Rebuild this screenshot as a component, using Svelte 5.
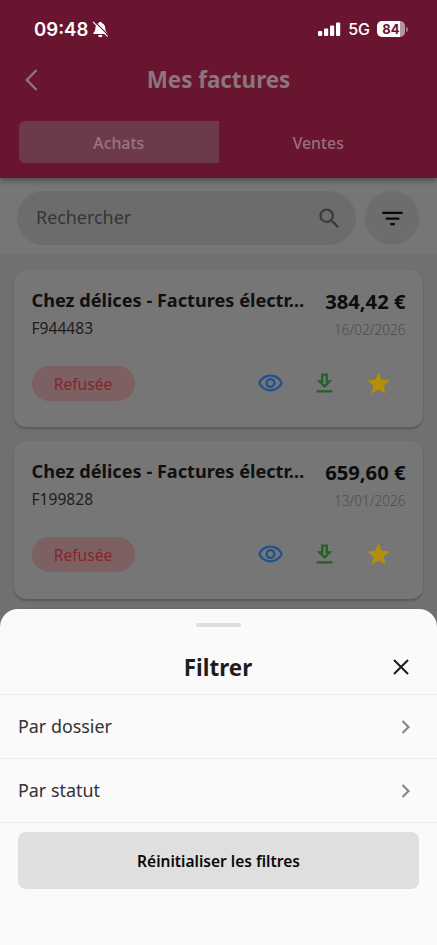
<script>
  const invoices = [
    { client: 'Chez délices - Factures électr…', number: 'F944483', amount: '384,42 €', date: '16/02/2026', status: 'Refusée' },
    { client: 'Chez délices - Factures électr…', number: 'F199828', amount: '659,60 €', date: '13/01/2026', status: 'Refusée' }
  ];
  const filters = ['Par dossier', 'Par statut'];
</script>

<div class="screen">
  <header>
    <div class="status-bar">
      <div class="clock">
        <span>09:48</span>
        <svg width="17" height="17" viewBox="0 0 17 17">
          <path d="M8.3 1C7.2 1 6.6 1.6 6.5 2.3C4.3 3 3.5 5 3.4 7.2C3.3 9.5 2.7 10.3 1.6 11.4C1 12.1 1.3 13 2.2 13H14.4C15.3 13 15.6 12.1 15 11.4C13.9 10.3 13.3 9.5 13.2 7.2C13.1 5 12.3 3 10.1 2.3C10 1.6 9.4 1 8.3 1ZM6.1 14A2.2 2.2 0 0 0 10.5 14Z" fill="#fff" />
          <path d="M2.6 0.6L16.4 14.4" stroke="#6a152f" stroke-width="1.3" />
          <path d="M1.3 1.2L15.3 15.2" stroke="#fff" stroke-width="1.2" stroke-linecap="round" />
        </svg>
      </div>
      <div class="signals">
        <svg width="23" height="15" viewBox="0 0 23 15" fill="#fff">
          <rect x="0" y="9" width="4.2" height="5" rx="1.1" />
          <rect x="6" y="6.5" width="4.2" height="7.5" rx="1.1" />
          <rect x="12" y="3.5" width="4.2" height="10.5" rx="1.1" />
          <rect x="18" y="0.5" width="4.2" height="13.5" rx="1.1" />
        </svg>
        <span class="network">5G</span>
        <span class="battery"><b>84</b></span>
        <i class="battery-tip"></i>
      </div>
    </div>
    <div class="title-bar">
      <svg width="16" height="24" viewBox="0 0 16 24" fill="none" stroke="#8b767e" stroke-width="2.4">
        <path d="M13.6 2L3.8 12L13.6 22" />
      </svg>
      <h1>Mes factures</h1>
    </div>
    <nav>
      <span class="tab active">Achats</span>
      <span class="tab">Ventes</span>
    </nav>
  </header>

  <section class="search">
    <div class="field">
      <span>Rechercher</span>
      <svg width="27" height="27" viewBox="0 0 24 24" fill="#3b3b3b">
        <path d="M15.5 14h-.79l-.28-.27A6.47 6.47 0 0 0 16 9.5 6.5 6.5 0 1 0 9.5 16c1.61 0 3.09-.59 4.23-1.57l.27.28v.79l5 4.99L20.49 19l-4.99-5zm-6 0C7.01 14 5 11.99 5 9.5S7.01 5 9.5 5 14 7.01 14 9.5 11.99 14 9.5 14z" />
      </svg>
    </div>
    <div class="filter">
      <svg width="27" height="27" viewBox="0 0 24 24" fill="#080808"><path d="M10 18h4v-2h-4v2zM3 6v2h18V6H3zm3 7h12v-2H6v2z" /></svg>
    </div>
  </section>

  <main>
    {#each invoices as invoice}
      <article>
        <div class="summary">
          <div class="client">
            <h2>{invoice.client}</h2>
            <span>{invoice.number}</span>
          </div>
          <div class="total">
            <strong>{invoice.amount}</strong>
            <span>{invoice.date}</span>
          </div>
        </div>
        <div class="actions">
          <span class="badge">{invoice.status}</span>
          <svg width="27" height="27" viewBox="0 0 24 24" fill="#1d5191">
            <path d="M12 6c3.79 0 7.17 2.13 8.82 5.5C19.17 14.87 15.79 17 12 17s-7.17-2.13-8.82-5.5C4.83 8.13 8.21 6 12 6m0-2C7 4 2.73 7.11 1 11.5 2.73 15.89 7 19 12 19s9.27-3.11 11-7.5C21.27 7.11 17 4 12 4zm0 5c1.38 0 2.5 1.12 2.5 2.5S13.38 14 12 14s-2.5-1.12-2.5-2.5S10.62 9 12 9m0-2c-2.48 0-4.5 2.02-4.5 4.5S9.52 16 12 16s4.5-2.02 4.5-4.5S14.48 7 12 7z" />
          </svg>
          <svg width="27" height="27" viewBox="0 0 24 24" fill="#23602a">
            <path d="M19 9h-4V3H9v6H5l7 7 7-7zm-8 2V5h2v6h1.17L12 13.17 9.83 11H11zm-6 7h14v2H5z" />
          </svg>
          <svg width="27" height="27" viewBox="0 0 24 24" fill="#b58e0a">
            <path d="M12 17.27L18.18 21l-1.64-7.03L22 9.24l-7.19-.61L12 2 9.19 8.63 2 9.24l5.46 4.73L5.82 21z" />
          </svg>
        </div>
      </article>
    {/each}
  </main>

  <div class="sheet">
    <i class="handle"></i>
    <div class="sheet-head">
      <h3>Filtrer</h3>
      <svg width="18" height="18" viewBox="0 0 18 18" stroke="#1c1c1c" stroke-width="2"><path d="M2 2L16 16M16 2L2 16" /></svg>
    </div>
    {#each filters as filter}
      <div class="row">
        <span>{filter}</span>
        <svg width="10" height="16" viewBox="0 0 10 16" fill="none" stroke="#858585" stroke-width="2.1"><path d="M1.5 2L7.5 8L1.5 14" /></svg>
      </div>
    {/each}
    <button>Réinitialiser les filtres</button>
  </div>
</div>

<style>
  .screen {
    position: relative;
    height: 945px;
    overflow: hidden;
    background: #707070;
    color: #1d1d1d;
    font-family: 'Noto Sans', sans-serif;
  }
  .screen * { box-sizing: border-box; }
  svg { display: block; flex: none; }
  h1, h2, h3 { margin: 0; }
  header {
    position: relative;
    height: 178px;
    background: #6a152f;
    box-shadow: 0 2px 6px rgba(0, 0, 0, 0.4);
  }
  .status-bar {
    display: flex;
    justify-content: space-between;
    height: 59px;
    padding: 0 29px 0 34px;
    color: #fff;
    font-family: Inter, sans-serif;
  }
  .clock, .signals { display: flex; align-items: center; height: 58px; }
  .clock { gap: 4px; font-size: 18.6px; font-weight: 600; }
  .network { margin-left: 7px; font-size: 16px; font-weight: 500; }
  .battery {
    display: flex;
    align-items: center;
    justify-content: center;
    width: 28px;
    height: 16px;
    margin-left: 7px;
    border-radius: 5px;
    background: linear-gradient(90deg, #fff 83%, #b795a0 83%);
    color: #6a152f;
    font-size: 13px;
  }
  .battery-tip { width: 2px; height: 5px; margin-left: 1px; border-radius: 0 2px 2px 0; background: #a07584; }
  .title-bar { display: flex; align-items: center; height: 42px; padding: 0 23px; }
  h1 { flex: 1; margin: 0 16px 0 0; color: #8b767e; font-size: 22.4px; line-height: 30px; text-align: center; }
  nav { display: flex; height: 42px; margin: 20px 19px 0; }
  .tab {
    flex: 1;
    color: #9a7080;
    font-size: 15.8px;
    font-weight: 500;
    line-height: 44px;
    text-align: center;
  }
  .active { border-radius: 6px 0 0 6px; background: #6d3a4a; color: #997582; }
  .search { display: flex; gap: 9px; height: 76px; padding: 13px 18px 9px 17px; background: #767676; }
  .field {
    display: flex;
    flex: 1;
    align-items: center;
    justify-content: space-between;
    padding: 0 13px 0 19px;
    border-radius: 27px;
    background: #6c6c6c;
    color: #353535;
    font-size: 17.9px;
  }
  .field span { margin-top: -2px; }
  .filter {
    display: flex;
    align-items: center;
    justify-content: center;
    width: 54px;
    border-radius: 50%;
    background: #6d6d6d;
  }
  main { display: flex; flex-direction: column; gap: 14px; padding: 16px 14px; }
  article {
    height: 157.4px;
    padding: 16px 17.5px 0;
    border-radius: 12px;
    background: #767676;
    box-shadow: 0 1.5px 2px rgba(0, 0, 0, 0.2);
  }
  .summary { display: flex; justify-content: space-between; height: 78px; }
  .client { display: flex; flex-direction: column; }
  h2 { color: #101010; font-size: 18.15px; line-height: 28px; white-space: nowrap; }
  .client span { font-size: 15.6px; line-height: 28px; }
  .total { display: flex; flex-direction: column; align-items: flex-end; white-space: nowrap; }
  strong { color: #0c0c0c; font-size: 20.2px; line-height: 31px; }
  .total span { color: #4d4d4d; font-size: 13.6px; font-weight: 300; line-height: 26px; }
  .actions { display: flex; align-items: center; height: 38px; padding-right: 13.5px; gap: 27px; }
  .badge {
    width: 103px;
    height: 35px;
    margin-right: auto;
    border-radius: 18px;
    background: #7c6062;
    color: #85252b;
    font-size: 15.6px;
    line-height: 36px;
    text-align: center;
  }
  .sheet {
    position: absolute;
    inset: 609px 0 0;
    display: flex;
    flex-direction: column;
    border-radius: 18px 18px 0 0;
    background: #fafafa;
  }
  .handle { width: 45px; height: 4px; margin: 14px auto 0; border-radius: 2px; background: #dedede; }
  .sheet-head, .row { display: flex; align-items: center; justify-content: space-between; border-bottom: 1px solid #ebebeb; }
  .sheet-head { height: 68px; padding: 13px 27px 0; }
  h3 { flex: 1; margin: 2px 0 0 17px; font-size: 22.4px; line-height: 30px; text-align: center; }
  .row { height: 64px; padding: 0 26px 0 18px; color: #333; font-size: 17.9px; }
  .row span { margin-top: -1px; }
  button {
    height: 57px;
    margin: 9px 18px 0;
    border: 0;
    border-radius: 8px;
    background: #dfdfdf;
    color: #080808;
    font: 600 15.5px 'Noto Sans', sans-serif;
  }
</style>
